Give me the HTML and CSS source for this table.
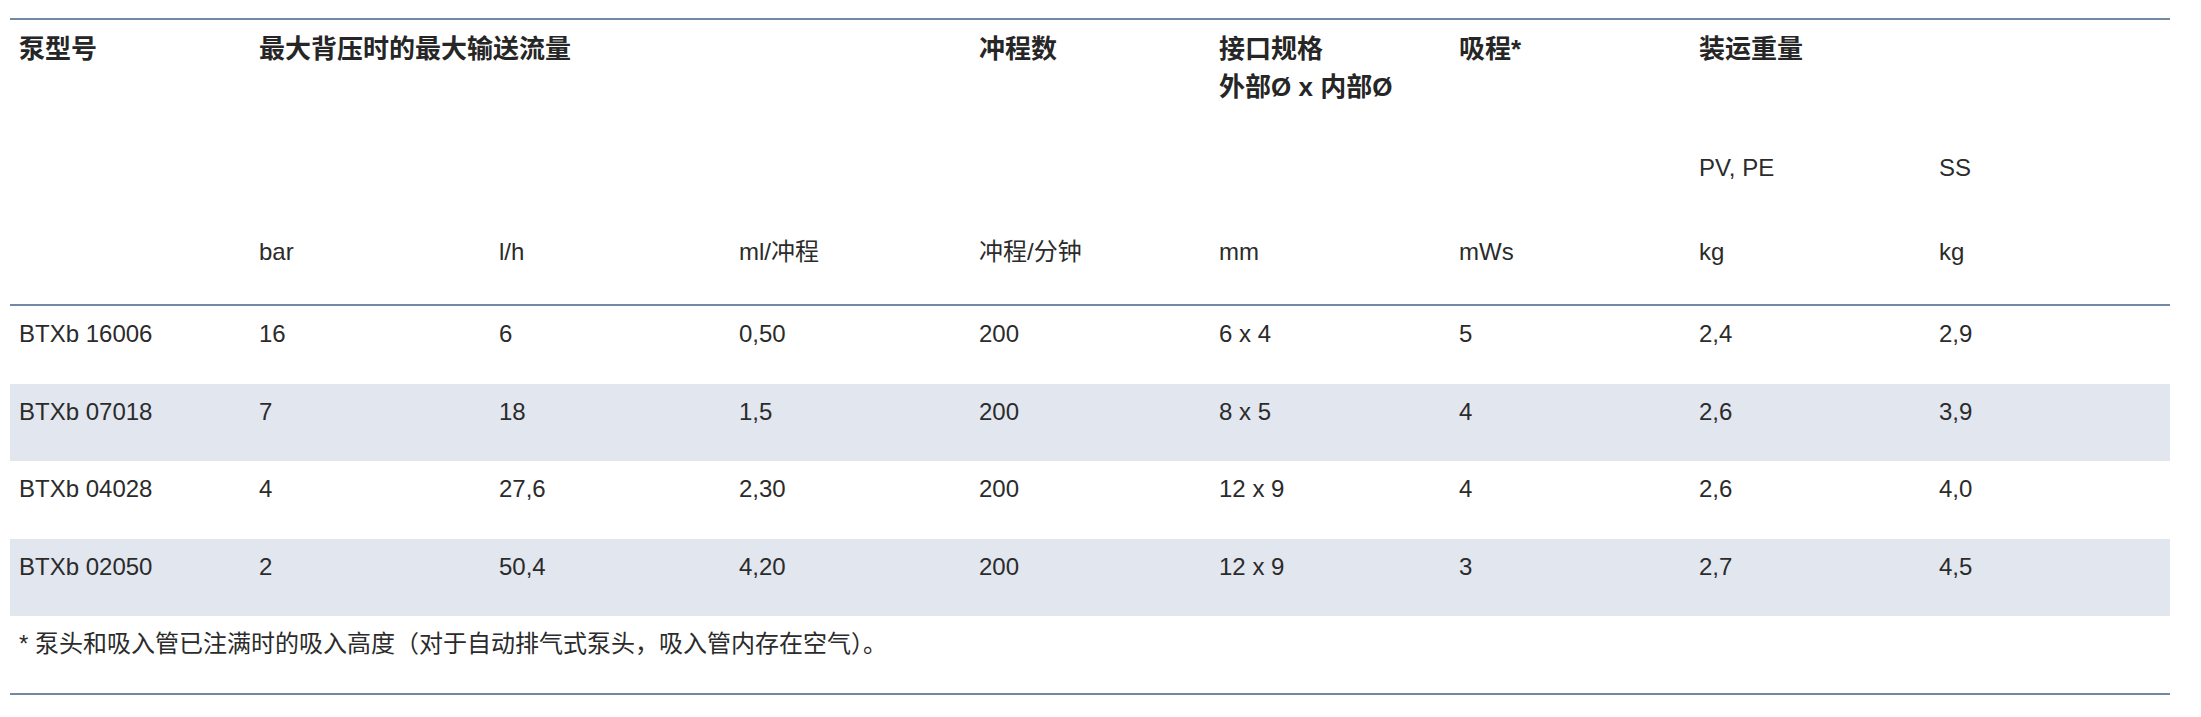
FILE: index.html
```html
<!DOCTYPE html>
<html lang="zh-CN">
<head>
<meta charset="utf-8">
<title>BTXb</title>
<link rel="stylesheet" href="styles.css">
</head>
<body>
<table class="spec">
  <colgroup>
    <col class="c"><col class="c"><col class="c"><col class="c"><col class="c"><col class="c"><col class="c"><col class="c"><col class="c">
  </colgroup>
  <thead>
    <tr class="h1">
      <th>泵型号</th>
      <th colspan="3">最大背压时的最大输送流量</th>
      <th>冲程数</th>
      <th>接口规格<br>外部Ø x 内部Ø</th>
      <th>吸程*</th>
      <th colspan="2">装运重量</th>
    </tr>
    <tr class="h2">
      <td></td><td></td><td></td><td></td><td></td><td></td><td></td>
      <td>PV, PE</td>
      <td>SS</td>
    </tr>
    <tr class="h3">
      <td></td>
      <td>bar</td>
      <td>l/h</td>
      <td>ml/冲程</td>
      <td>冲程/分钟</td>
      <td>mm</td>
      <td>mWs</td>
      <td>kg</td>
      <td>kg</td>
    </tr>
  </thead>
  <tbody>
    <tr>
      <td>BTXb 16006</td><td>16</td><td>6</td><td>0,50</td><td>200</td><td>6 x 4</td><td>5</td><td>2,4</td><td>2,9</td>
    </tr>
    <tr class="alt">
      <td>BTXb 07018</td><td>7</td><td>18</td><td>1,5</td><td>200</td><td>8 x 5</td><td>4</td><td>2,6</td><td>3,9</td>
    </tr>
    <tr>
      <td>BTXb 04028</td><td>4</td><td>27,6</td><td>2,30</td><td>200</td><td>12 x 9</td><td>4</td><td>2,6</td><td>4,0</td>
    </tr>
    <tr class="alt">
      <td>BTXb 02050</td><td>2</td><td>50,4</td><td>4,20</td><td>200</td><td>12 x 9</td><td>3</td><td>2,7</td><td>4,5</td>
    </tr>
  </tbody>
  <tfoot>
    <tr>
      <td colspan="9">* 泵头和吸入管已注满时的吸入高度（对于自动排气式泵头，吸入管内存在空气）。</td>
    </tr>
  </tfoot>
</table>
</body>
</html>
```

FILE: styles.css
```css
html, body {
  margin: 0;
  padding: 0;
  background: #ffffff;
}

body {
  padding: 18px 0 0 10px;
  font-family: "Liberation Sans", Arial, "Noto Sans CJK SC", sans-serif;
  font-size: 24px;
  line-height: 36px;
  color: #2b2b2b;
}

.spec {
  table-layout: fixed;
  width: 2160px;
  border-collapse: separate;
  border-spacing: 0;
}

.spec .c {
  width: 240px;
}

.spec th,
.spec td {
  text-align: left;
  vertical-align: top;
  padding: 10px 9px 0 9px;
  white-space: nowrap;
}

.spec .h1 th {
  border-top: 2px solid #7387a6;
  font-size: 26px;
  line-height: 38px;
  font-weight: 700;
  color: #262626;
  padding-top: 10px;
  padding-bottom: 34px;
}

.spec .h2 td {
  padding-bottom: 38px;
}

.spec .h3 td {
  padding-bottom: 34px;
  border-bottom: 2px solid #7387a6;
}

.spec tbody td {
  padding-bottom: 31.5px;
}

.spec tbody .alt td {
  background: #e2e6ef;
}

.spec tfoot td {
  padding-bottom: 31px;
  border-bottom: 2px solid #7387a6;
}
```
